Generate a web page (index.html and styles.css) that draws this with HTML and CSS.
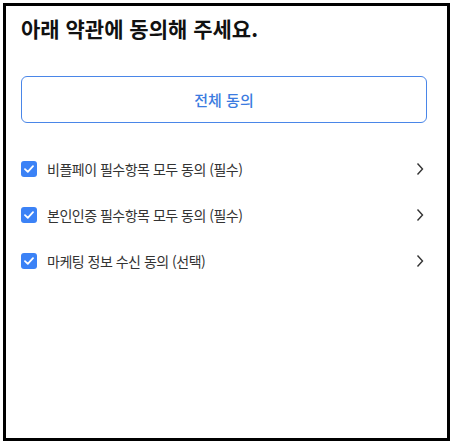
FILE: index.html
```html
<!DOCTYPE html>
<html lang="ko">
<head>
    <meta charset="UTF-8">
    <meta name="viewport" content="width=device-width, initial-scale=1.0">
    <title>약관 동의</title>
    <link rel="stylesheet" href="styles.css">
</head>
<body>
    <div class="frame">
        <h1 class="title">아래 약관에 동의해 주세요.</h1>

        <button class="agree-all">전체 동의</button>

        <ul class="terms">
            <li class="term">
                <span class="check">
                    <svg width="10" height="8" viewBox="0 0 10 8"><path d="M1 4.2 L3.8 6.8 L9 1.2" fill="none" stroke="#fff" stroke-width="1.8" stroke-linecap="round" stroke-linejoin="round"/></svg>
                </span>
                <span class="term-label">비플페이 필수항목 모두 동의 (필수)</span>
                <svg class="chevron" width="8" height="14" viewBox="0 0 8 14"><path d="M1.5 1.5 L6.5 7 L1.5 12.5" fill="none" stroke="#333" stroke-width="1.4"/></svg>
            </li>
            <li class="term">
                <span class="check">
                    <svg width="10" height="8" viewBox="0 0 10 8"><path d="M1 4.2 L3.8 6.8 L9 1.2" fill="none" stroke="#fff" stroke-width="1.8" stroke-linecap="round" stroke-linejoin="round"/></svg>
                </span>
                <span class="term-label">본인인증 필수항목 모두 동의 (필수)</span>
                <svg class="chevron" width="8" height="14" viewBox="0 0 8 14"><path d="M1.5 1.5 L6.5 7 L1.5 12.5" fill="none" stroke="#333" stroke-width="1.4"/></svg>
            </li>
            <li class="term">
                <span class="check">
                    <svg width="10" height="8" viewBox="0 0 10 8"><path d="M1 4.2 L3.8 6.8 L9 1.2" fill="none" stroke="#fff" stroke-width="1.8" stroke-linecap="round" stroke-linejoin="round"/></svg>
                </span>
                <span class="term-label">마케팅 정보 수신 동의 (선택)</span>
                <svg class="chevron" width="8" height="14" viewBox="0 0 8 14"><path d="M1.5 1.5 L6.5 7 L1.5 12.5" fill="none" stroke="#333" stroke-width="1.4"/></svg>
            </li>
        </ul>
    </div>
</body>
</html>
```

FILE: styles.css
```css
body {
    margin: 0;
    padding: 3px 0 0 3px;
    background: #fff;
    font-family: "Noto Sans CJK KR", "Noto Sans", sans-serif;
    color: #222;
}

.frame {
    box-sizing: border-box;
    width: 447px;
    height: 438px;
    border: 3px solid #000;
    padding: 8px 20px 0 15px;
}

.title {
    margin: 0;
    font-size: 21px;
    font-weight: 700;
    line-height: 28px;
    color: #111;
}

.agree-all {
    display: block;
    width: 100%;
    height: 47px;
    margin-top: 34px;
    background: #fff;
    border: 1.5px solid #4a86e8;
    border-radius: 6px;
    color: #3b7be0;
    font-family: inherit;
    font-size: 15px;
    font-weight: 500;
}

.terms {
    list-style: none;
    margin: 23px 0 0;
    padding: 0;
}

.term {
    display: flex;
    align-items: center;
    height: 46px;
}

.check {
    display: flex;
    align-items: center;
    justify-content: center;
    width: 16px;
    height: 16px;
    border-radius: 3px;
    background: #3b82f6;
}

.term-label {
    flex-grow: 1;
    margin-left: 10px;
    font-size: 14px;
    color: #333;
    letter-spacing: -0.5px;
}

.chevron {
    margin-right: 3px;
}
```
